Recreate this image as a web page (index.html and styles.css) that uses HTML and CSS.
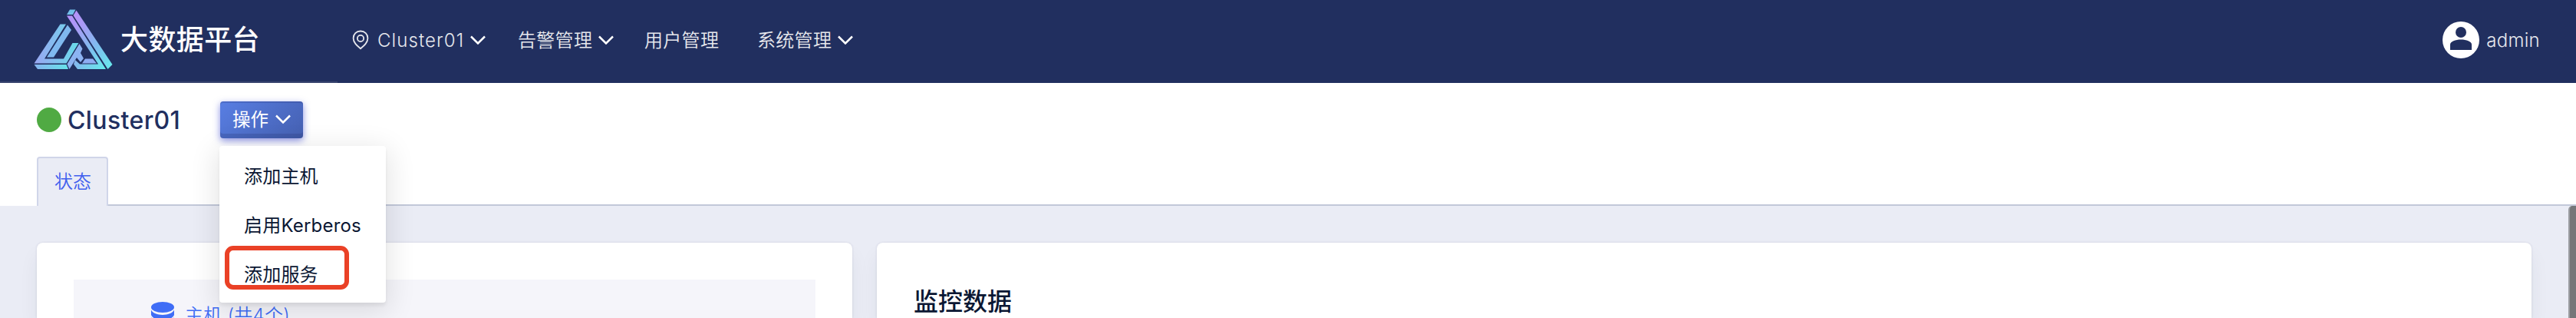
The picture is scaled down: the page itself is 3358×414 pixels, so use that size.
FILE: index.html
```html
<!DOCTYPE html>
<html lang="zh">
<head>
<meta charset="utf-8">
<title>大数据平台</title>
<link rel="stylesheet" href="styles.css">
</head>
<body>
<header class="header">
  <div class="brand">
    <svg class="logo" viewBox="0 0 104 80">
      <defs>
        <linearGradient id="arm" x1="0" y1="0" x2="1" y2="1"><stop offset="0" stop-color="#b791fa"/><stop offset=".25" stop-color="#a99af6"/><stop offset=".6" stop-color="#7fbdee"/><stop offset="1" stop-color="#66ecec"/></linearGradient>
        <linearGradient id="left" x1="0" y1="0" x2="1" y2="0"><stop offset="0" stop-color="#9aa6f2"/><stop offset="1" stop-color="#68dbea"/></linearGradient>
        <linearGradient id="base" x1="0" y1="0" x2="1" y2="0"><stop offset="0" stop-color="#86b4ef"/><stop offset="1" stop-color="#66e3ea"/></linearGradient>
      </defs>
      <path d="M47 .5H54.500L51 7H43Z" fill="#72bfea"/>
      <path d="M43 8.500H50L94 78H57L52 71.500L54 66L60 71.500H84Z" fill="url(#arm)"/>
      <path d="M55.500 1.500L102.500 72L96.500 78L51.500 8Z" fill="url(#arm)"/>
      <path d="M34.500 19.500H42L14 64.500H39L50.500 44H58.500L42.500 70.500H.5Z" fill="url(#left)"/>
      <path d="M44 20.500L49 27L26 62.500H17Z" fill="#7fb9ef"/>
      <path d="M.5 72H42.500L45 78H5Z" fill="url(#base)"/>
      <path d="M59.500 45L63.500 51.500L61 57L65 64L61 69L56 63L46.500 78L43.500 71.500Z" fill="#8cb3f2"/>
      <path d="M67 64.500H77L82 70.500H63Z" fill="#8eadf3"/>
    </svg>
    <h1 class="brand-name">大数据平台</h1>
  </div>
  <nav class="nav">
    <a class="nav-item cluster"><svg class="pin" viewBox="0 0 22 26"><path d="M11 1.500C5.500 1.500 1.600 5.600 1.600 10.700C1.600 16.500 6.500 20.500 11 24.300C15.500 20.500 20.400 16.500 20.400 10.700C20.400 5.600 16.500 1.500 11 1.500Z"/><circle cx="11" cy="11" r="4.100"/></svg><span class="latin">Cluster01</span><svg class="chev" viewBox="0 0 20 12"><path d="M1 1.500L10 10.500L19 1.500"/></svg></a>
    <a class="nav-item alarm"><span>告警管理</span><svg class="chev" viewBox="0 0 20 12"><path d="M1 1.500L10 10.500L19 1.500"/></svg></a>
    <a class="nav-item users"><span>用户管理</span></a>
    <a class="nav-item"><span>系统管理</span><svg class="chev" viewBox="0 0 20 12"><path d="M1 1.500L10 10.500L19 1.500"/></svg></a>
  </nav>
  <div class="account">
    <svg class="avatar" viewBox="0 0 48 48"><circle cx="24" cy="24" r="24" fill="#fff"/><circle cx="24" cy="14" r="7"/><path d="M10 37V30C10 26 17 23.500 24 23.500S38 26 38 30V37Z"/></svg>
    <span class="user">admin</span>
  </div>
</header>
<section class="subhead">
  <div class="title-row">
    <i class="dot"></i>
    <h2 class="cluster-name">Cluster01</h2>
    <div class="actions">
      <button class="action-btn"><span>操作</span><svg class="chev" viewBox="0 0 20 12"><path d="M1 1.500L10 10.500L19 1.500"/></svg></button>
      <ul class="menu">
        <li>添加主机</li>
        <li>启用<span class="kerberos">Kerberos</span></li>
        <li>添加服务<i class="highlight"></i></li>
      </ul>
    </div>
  </div>
  <div class="tabs"><a class="tab">状态</a><span class="tab-line"></span></div>
</section>
<main class="content">
  <section class="card hosts">
    <div class="panel">
      <svg class="db" viewBox="0 0 30 38"><ellipse cx="15" cy="7" rx="15" ry="7"/><path d="M0 10.500C4 19 26 19 30 10.500V17C26 26 4 26 0 17Z"/><path d="M0 20C4 28.500 26 28.500 30 20V27C26 36 4 36 0 27Z"/></svg>
      <span class="host-label">主机 (共4个)</span>
    </div>
  </section>
  <section class="card metrics"><h3 class="metrics-title">监控数据</h3></section>
  <div class="scrollbar"></div>
</main>
</body>
</html>
```

FILE: styles.css
```css
* { box-sizing: border-box; margin: 0; padding: 0; }
body {
  height: 414px;
  overflow: hidden;
  display: flex;
  flex-direction: column;
  background: #eaecf5;
  font-family: Inter, "Noto Sans CJK SC", sans-serif;
  font-size: 24px;
  line-height: 36px;
  color: #0b1733;
}
svg { display: block; flex: none; }
i { display: block; }
.header { display: flex; align-items: center; flex: none; height: 108px; background: #212f5f; color: #e7e8ed; }
.brand { display: flex; align-items: center; width: 440px; height: 108px; padding-left: 44px; border-bottom: 2px solid #39456f; flex: none; }
.logo { width: 104px; height: 80px; margin-top: -2px; }
.brand-name { margin: -3px 0 0 9px; font-size: 36px; font-weight: 500; line-height: 50px; letter-spacing: .4px; color: #fff; white-space: nowrap; }
.nav { display: flex; align-items: center; margin-left: 19px; height: 104px; align-self: flex-start; }
.nav-item { display: flex; align-items: center; white-space: nowrap; }
.nav-item span { padding-top: 1px; letter-spacing: .3px; font-weight: 350; }
.pin { width: 22px; height: 26px; margin-right: 11px; fill: none; stroke: #e7e8ed; stroke-width: 1.8; }
.chev { width: 20px; height: 12px; margin-left: 8px; fill: none; stroke: #fff; stroke-width: 2.5; }
.nav-item .latin { letter-spacing: 1.1px; }
.cluster { width: 216px; }
.alarm { width: 165px; }
.users { width: 147px; }
.account { display: flex; align-items: center; gap: 9px; height: 104px; align-self: flex-start; margin: 0 47px 0 auto; }
.avatar { width: 48px; height: 48px; fill: #212f5f; }
.user { padding-top: 2px; font-weight: 350; letter-spacing: .3px; }
.subhead { height: 160px; flex: none; background: #fff; }
.title-row { display: flex; height: 96px; padding: 24px 0 0 48px; }
.dot { width: 32px; height: 32px; margin-top: 8px; border-radius: 50%; background: #50aa43; }
.cluster-name { width: 199px; margin-left: 8px; padding-top: 5px; font-size: 32px; line-height: 40px; font-weight: 500; letter-spacing: .4px; color: #212f5f; }
.actions { position: relative; }
.action-btn {
  display: flex; align-items: center; width: 108px; height: 48px; padding: 0 16px 2px;
  border: 0; border-radius: 4px; color: #fff; font: inherit; white-space: nowrap;
  background: linear-gradient(135deg, #587ee3, #4560b1);
  box-shadow: inset 0 2px rgba(40,55,120,.24), inset 0 -6px rgba(40,55,120,.25), 0 3px 10px rgba(62,74,210,.6);
}
.action-btn span { flex: none; width: 47px; font-size: 23.5px; padding-top: 2px; }
.action-btn .chev { margin-left: 9px; }
.menu {
  position: absolute; left: -1px; top: 58px; z-index: 5; width: 217px; height: 204px; padding: 8px 0;
  list-style: none; background: #fff; border-radius: 4px;
  box-shadow: 0 4px 4px rgba(0,0,0,.06), 0 8px 36px 4px rgba(0,0,0,.11);
}
.menu li { position: relative; height: 64px; padding-left: 32px; line-height: 64px; letter-spacing: .2px; white-space: nowrap; }
.highlight { position: absolute; left: 7px; top: -6px; width: 162px; height: 57px; border: 6px solid #ea4126; border-radius: 11px; }
.tabs { display: flex; height: 64px; padding-left: 48px; }
.tab { width: 93px; height: 64px; padding: 13px 0 0 21px; border: 2px solid #d0d5e9; border-bottom: 0; border-radius: 4px 4px 0 0; background: #eaecf5; color: #4160ee; font-weight: 350; white-space: nowrap; }
.tab-line { flex: 1; border-bottom: 2px solid #c2c8d9; }
.content { position: relative; display: flex; gap: 32px; flex: 1; min-height: 0; overflow: hidden; padding: 48px 58px 0 48px; }
.card { height: 98px; background: #fff; border-radius: 8px 8px 0 0; box-shadow: 0 0 3px rgba(50,50,100,.14), 0 16px 26px rgba(40,50,70,.06); }
.hosts { width: 1063px; padding: 48px 48px 0; }
.panel { display: flex; height: 50px; padding: 29px 0 0 101px; overflow: hidden; background: #f5f5fa; color: #3f6df6; font-weight: 350; }
.db { width: 30px; height: 38px; fill: #3f6df6; }
.host-label { margin-left: 14px; letter-spacing: .3px; }
.metrics { flex: 1; padding: 55px 48px 0; }
.metrics-title { font-size: 32px; line-height: 43px; font-weight: 500; }
.scrollbar { position: absolute; right: 0; top: 0; bottom: 0; width: 10px; background: #757679; border-left: 2px solid #9b9da2; border-top-left-radius: 5px; }
```
